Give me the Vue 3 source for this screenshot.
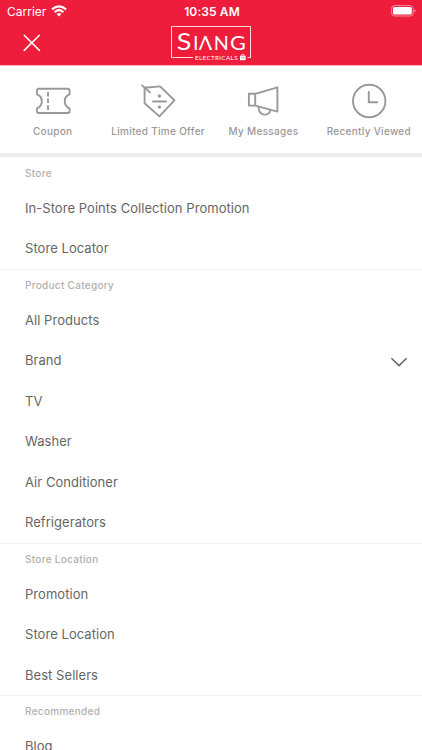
<script setup>
const shortcuts = [
  { id: 'coupon', label: 'Coupon' },
  { id: 'offer', label: 'Limited Time Offer' },
  { id: 'messages', label: 'My Messages' },
  { id: 'recent', label: 'Recently Viewed' },
]
const sections = [
  { title: 'Store', items: ['In-Store Points Collection Promotion', 'Store Locator'] },
  { title: 'Product Category', items: ['All Products', 'Brand', 'TV', 'Washer', 'Air Conditioner', 'Refrigerators'] },
  { title: 'Store Location', items: ['Promotion', 'Store Location', 'Best Sellers'] },
  { title: 'Recommended', items: ['Blog'] },
]
const expandable = ['Brand']
</script>

<template>
  <div class="screen">
    <header class="header">
      <div class="status">
        <div class="carrier">
          <span>Carrier</span>
          <svg class="wifi" width="16" height="12" viewBox="0 0 16 12" fill="none" stroke="#fff" stroke-width="2.1">
            <path d="M1 4.4Q8 -1.8 15 4.4" />
            <path d="M3.6 7.2Q8 3.2 12.4 7.2" />
            <path d="M8 11.4L5.6 9Q8 7 10.4 9Z" fill="#fff" stroke="none" />
          </svg>
        </div>
        <span class="time">10:35 AM</span>
        <svg class="battery" width="26" height="12" viewBox="0 0 26 12">
          <rect x="0.6" y="0.6" width="21.6" height="10.4" rx="3" fill="none" stroke="#fff" stroke-opacity="0.5" />
          <rect x="2" y="2" width="18.8" height="7.6" rx="1.6" fill="#fff" />
          <path d="M23.4 4v3.6q1.3-.5 1.3-1.8t-1.3-1.8" fill="#fff" fill-opacity="0.5" />
        </svg>
      </div>
      <div class="bar">
        <svg class="close" width="18" height="18" viewBox="0 0 18 18" stroke="#fff" stroke-width="1.5" stroke-linecap="round">
          <path d="M1.2 1.2l15.2 15.2M16.4 1.2L1.2 16.4" />
        </svg>
        <svg class="logo" width="82" height="38" viewBox="170 25 82 38">
          <path d="M193 57.5H171.5V26.5H250.5V57.5H247.5" fill="none" stroke="#fff" stroke-opacity="0.85" />
          <text class="logo-cap" x="176.8" y="49.8" textLength="14.6" lengthAdjust="spacingAndGlyphs">S</text>
          <text class="logo-main" y="49.8" x="193 198.8">IΛ</text>
          <text class="logo-main" x="213.8" y="49.8">N</text>
          <text class="logo-main" x="230" y="49.8" textLength="15.8" lengthAdjust="spacingAndGlyphs">G</text>
          <text class="logo-sub" x="195" y="59.8" textLength="42.5">ELECTRICALS</text>
          <path d="M240 55.8h5.6v4.4H240z" fill="#fff" />
          <path d="M241.4 56v-1q1.4-1.6 2.8 0v1" fill="none" stroke="#fff" stroke-width="0.8" />
          <path d="M241.4 57.2q1.4 1.4 2.8 0" fill="none" stroke="#ed1d3b" stroke-width="0.6" />
        </svg>
      </div>
    </header>

    <nav class="shortcuts">
      <a v-for="s in shortcuts" :key="s.id" class="shortcut">
        <svg class="icon" width="38" height="38" viewBox="0 0 38 38">
          <g v-if="s.id === 'coupon'">
            <path d="M4.9 5.8H33.7Q35.6 5.8 35.6 7.6V11.4C29.2 13.5 29.2 23.2 35.6 25.3V28.2Q35.6 30 33.7 30H4.9Q3 30 3 28.2V25.3C9.4 23.2 9.4 13.5 3 11.4V7.6Q3 5.8 4.9 5.8Z" />
            <path d="M14 9v4.4M14 15.6v4.4M14 22.2v4.8" />
          </g>
          <g v-else-if="s.id === 'offer'">
            <path d="M5.6 4.8L21 3.4L35.4 17.3L20.4 33.4L5.6 20.2Z" />
            <path d="M3.1 2.4L11 9.4M14 18.5H27" stroke-linecap="round" />
            <circle class="dot" cx="20.4" cy="13" r="1.7" />
            <circle class="dot" cx="20.4" cy="24.1" r="1.7" />
          </g>
          <g v-else-if="s.id === 'messages'">
            <path d="M4.9 10.8H11.2V22.6H4.9ZM11.2 10.8L33.4 4.3V28.6L11.2 22.6" />
            <path d="M14.6 24C14.6 33.2 25.2 34 26.4 27" />
          </g>
          <g v-else>
            <circle cx="19.2" cy="18" r="16.2" />
            <path d="M18.8 9V19.2H27.2" stroke-linecap="round" />
          </g>
        </svg>
        <span>{{ s.label }}</span>
      </a>
    </nav>

    <section v-for="sec in sections" :key="sec.title" class="section">
      <h2>{{ sec.title }}</h2>
      <ul>
        <li v-for="item in sec.items" :key="item">
          <span>{{ item }}</span>
          <svg v-if="expandable.includes(item)" class="chevron" width="18" height="10" viewBox="0 0 18 10">
            <path d="M1.4 1.2L9 8.6L16.6 1.2" />
          </svg>
        </li>
      </ul>
    </section>
  </div>
</template>

<style>
body {
  margin: 0;
  overflow: hidden;
}
</style>

<style scoped>
.screen {
  width: 422px;
  height: 750px;
  overflow: hidden;
  background: #fff;
  font-family: Inter, 'Liberation Sans', sans-serif;
  color: #666;
}
.header {
  height: 66px;
  box-sizing: border-box;
  background: #ed1d3b;
  color: #fff;
  border-bottom: 1px solid #f6b5bf;
}
.status {
  display: grid;
  grid-template-columns: 1fr auto 1fr;
  align-items: center;
  height: 22px;
  padding: 0 5px 0 7px;
}
.carrier {
  display: flex;
  align-items: center;
  gap: 5px;
  font-size: 12px;
}
.time {
  font-size: 12px;
  font-weight: 600;
  letter-spacing: 0.1px;
}
.battery {
  justify-self: end;
  margin-bottom: 1px;
}
.bar {
  display: grid;
  grid-template-columns: 1fr auto 1fr;
  align-items: start;
  padding-top: 3px;
}
.close {
  margin: 9px 0 0 23px;
}
.logo {
  display: block;
}
.logo-main {
  font-family: Lato, sans-serif;
  font-size: 19.8px;
  fill: #fff;
}
.logo-cap {
  font-family: Lato, sans-serif;
  font-size: 23.5px;
  fill: #fff;
}
.logo-sub {
  font-family: Lato, sans-serif;
  font-size: 6.2px;
  fill: #fff;
}
.shortcuts {
  display: grid;
  grid-template-columns: repeat(4, 105.4px);
  height: 87px;
  border-bottom: 4px solid #ededed;
  font-size: 10px;
  font-weight: 500;
  letter-spacing: 0.3px;
  color: #999;
}
.shortcut {
  display: flex;
  flex-direction: column;
  align-items: center;
  padding-top: 17px;
  white-space: nowrap;
}
.shortcut span {
  margin-top: 3px;
  line-height: 14px;
}
.icon {
  fill: none;
  stroke: #999;
  stroke-width: 1.9;
  stroke-linejoin: round;
}
.dot {
  fill: #999;
  stroke: none;
}
.section + .section {
  box-shadow: inset 0 1px #f2f2f2;
}
h2 {
  margin: 0;
  padding-left: 25px;
  height: 31.2px;
  line-height: 32px;
  font-size: 10px;
  font-weight: 500;
  letter-spacing: 0.3px;
  color: #b0b0b0;
}
.section:first-of-type h2 {
  height: 30.8px;
}
.section:nth-of-type(2) {
  padding-bottom: 0.4px;
}
ul {
  margin: 0;
  padding: 0;
  list-style: none;
}
li {
  display: flex;
  align-items: center;
  justify-content: space-between;
  height: 40.4px;
  padding: 0 14px 0 25px;
  font-size: 13px;
  letter-spacing: 0.05px;
}
.chevron {
  margin-top: 3px;
  fill: none;
  stroke: #666;
  stroke-width: 1.5;
}
</style>
